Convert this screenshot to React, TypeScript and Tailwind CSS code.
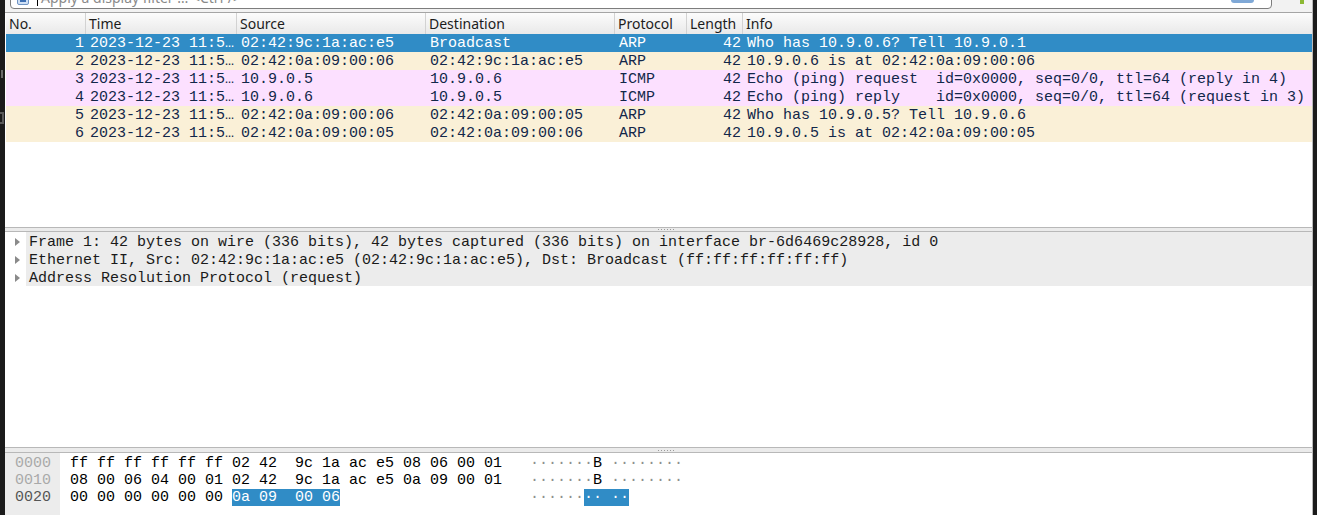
import React from "react";

const mono = "font-['Liberation_Mono',monospace] text-[15px]";
const sans = "font-['Noto_Sans',sans-serif] text-[13px]";

type Packet = {
  no: number;
  src: string;
  dst: string;
  proto: string;
  info: string;
  kind: "arp" | "icmp";
};

const packets: Packet[] = [
  { no: 1, src: "02:42:9c:1a:ac:e5", dst: "Broadcast", proto: "ARP", info: "Who has 10.9.0.6? Tell 10.9.0.1", kind: "arp" },
  { no: 2, src: "02:42:0a:09:00:06", dst: "02:42:9c:1a:ac:e5", proto: "ARP", info: "10.9.0.6 is at 02:42:0a:09:00:06", kind: "arp" },
  { no: 3, src: "10.9.0.5", dst: "10.9.0.6", proto: "ICMP", info: "Echo (ping) request  id=0x0000, seq=0/0, ttl=64 (reply in 4)", kind: "icmp" },
  { no: 4, src: "10.9.0.6", dst: "10.9.0.5", proto: "ICMP", info: "Echo (ping) reply    id=0x0000, seq=0/0, ttl=64 (request in 3)", kind: "icmp" },
  { no: 5, src: "02:42:0a:09:00:06", dst: "02:42:0a:09:00:05", proto: "ARP", info: "Who has 10.9.0.5? Tell 10.9.0.6", kind: "arp" },
  { no: 6, src: "02:42:0a:09:00:05", dst: "02:42:0a:09:00:06", proto: "ARP", info: "10.9.0.5 is at 02:42:0a:09:00:05", kind: "arp" },
];

const details = [
  "Frame 1: 42 bytes on wire (336 bits), 42 bytes captured (336 bits) on interface br-6d6469c28928, id 0",
  "Ethernet II, Src: 02:42:9c:1a:ac:e5 (02:42:9c:1a:ac:e5), Dst: Broadcast (ff:ff:ff:ff:ff:ff)",
  "Address Resolution Protocol (request)",
];

const columns = [
  { label: "No.", w: "w-[80px]" },
  { label: "Time", w: "w-[151px]" },
  { label: "Source", w: "w-[189px]" },
  { label: "Destination", w: "w-[189px]" },
  { label: "Protocol", w: "w-[72px]" },
  { label: "Length", w: "w-[56px]" },
  { label: "Info", w: "flex-1" },
];

const Splitter = ({ h }: { h: string }) => (
  <div className={`${h} shrink-0 border-y border-[#b8b8b8] bg-[#ebebeb] flex items-center justify-center`}>
    <div className="flex gap-[2px] ml-[14px]">
      {[0, 1, 2, 3, 4, 5].map((i) => (
        <span key={i} className="w-px h-px bg-[#9a9a9a]" />
      ))}
    </div>
  </div>
);

const FilterBar = () => (
  <div className="h-[13px] shrink-0 bg-[#f2f2f2] border-b border-[#a5a5a5] flex items-end overflow-hidden">
    <div className="flex-1 ml-[5px] mr-[28px] h-[30px] mb-[3px] bg-white border border-[#7d7d7d] rounded-[4px] flex items-end pb-[1px] overflow-hidden">
      <div className="w-[12px] h-[14px] ml-[6px] mb-[2px] bg-[#cfe0f5] border border-[#6f94c4] rounded-[2px] flex justify-center">
        <div className="w-[6px] h-[8px] bg-[#3d6fb3] mt-[2px]" />
      </div>
      <div className="w-px h-[16px] bg-black ml-[8px] mb-[1px]" />
      <span className={`${sans} text-[14px] text-[#8a8a8a] ml-[3px] leading-[16px] mb-[1px]`}>
        Apply a display filter … &lt;Ctrl-/&gt;
      </span>
      <div className="flex-1" />
      <div className="w-[23px] h-[18px] bg-[#7fa8d6] rounded-[3px] mr-[17px] mb-[4px]" />
    </div>
    <div className="w-[4px] h-[5px] bg-[#8cb833] mb-[8px] mr-[8px]" />
  </div>
);

const PacketList = () => (
  <div className="h-[214px] shrink-0 bg-white flex flex-col pl-px">
    <div className="h-[21px] shrink-0 flex bg-gradient-to-b from-[#fcfcfc] to-[#e9e9e9]">
      {columns.map((c, i) => (
        <div
          key={c.label}
          className={`${c.w} ${sans} text-[14px] text-[#1c1c1c] pl-[3px] flex items-center ${
            i < columns.length - 1 ? "border-r border-[#d2d2d2]" : ""
          }`}
        >
          {c.label}
        </div>
      ))}
    </div>
    {packets.map((p) => {
      const selected = p.no === 1;
      const bg = selected
        ? "bg-[#308cc6] text-white"
        : p.kind === "arp"
        ? "bg-[#faf0d7] text-[#12274a]"
        : "bg-[#fce0ff] text-[#12274a]";
      return (
        <div key={p.no} className={`h-[18px] pt-[3px] flex items-center whitespace-pre ${mono} ${bg}`}>
          <div className="w-[80px] text-right pr-[2px]">{p.no}</div>
          <div className="w-[151px] pl-[4px]">2023-12-23 11:5…</div>
          <div className="w-[189px] pl-[4px]">{p.src}</div>
          <div className="w-[189px] pl-[4px]">{p.dst}</div>
          <div className="w-[72px] pl-[4px]">{p.proto}</div>
          <div className="w-[56px] text-right pr-[2px]">42</div>
          <div className="flex-1 pl-[4px]">{p.info}</div>
        </div>
      );
    })}
  </div>
);

const DetailPane = () => (
  <div className="h-[215px] shrink-0 bg-white flex flex-col">
    {details.map((d) => (
      <div key={d} className="h-[18px] flex items-center">
        <div className="w-[21px] h-full flex items-center pl-[10px] pt-[2px]">
          <svg width="5" height="8" viewBox="0 0 5 8">
            <path d="M0 0 L5 4 L0 8 Z" fill="#8a8a8a" />
          </svg>
        </div>
        <div className={`flex-1 h-full flex items-center pt-[4px] bg-[#ececec] pl-[3px] whitespace-pre text-[#1a1a1a] ${mono}`}>
          {d}
        </div>
      </div>
    ))}
  </div>
);

const hexLines = [
  { off: "0000", pre: "ff ff ff ff ff ff 02 42  9c 1a ac e5 08 06 00 01", mark: "", offColor: "text-[#a9a9a9]" },
  { off: "0010", pre: "08 00 06 04 00 01 02 42  9c 1a ac e5 0a 09 00 01", mark: "", offColor: "text-[#a9a9a9]" },
  { off: "0020", pre: "00 00 00 00 00 00 ", mark: "0a 09  00 06", offColor: "text-[#555555]" },
];

const BytesPane = () => (
  <div className="flex-1 bg-white flex">
    <div className="w-[55px] bg-[#ececec] pt-[2px]">
      {hexLines.map((l) => (
        <div key={l.off} className={`h-[17px] leading-[17px] pl-[10px] ${mono} ${l.offColor}`}>
          {l.off}
        </div>
      ))}
    </div>
    <div className="pl-[10px] pt-[2px]">
      {hexLines.map((l) => (
        <div key={l.off} className={`h-[17px] leading-[17px] whitespace-pre flex text-black ${mono}`}>
          <div className="w-[460px]">
            {l.pre}
            {l.mark && <span className="bg-[#308cc6] text-white">{l.mark}</span>}
          </div>
          {l.mark ? (
            <div>
              <span className="text-[#8f8f8f]">······</span>
              <span className="bg-[#308cc6] text-white">·· ··</span>
            </div>
          ) : (
            <div>
              <span className="text-[#8f8f8f]">·······</span>
              <span>B</span>
              <span className="text-[#8f8f8f]"> ········</span>
            </div>
          )}
        </div>
      ))}
    </div>
  </div>
);

export default function App() {
  return (
    <div className="w-[1317px] h-[515px] bg-[#1b1b1b] flex overflow-hidden">
      <div className="w-[5px] shrink-0 flex flex-col">
        <div className="h-[70px]" />
        <div className="w-[3px] h-[8px] border-r-2 border-[#6a6a6a]" />
        <div className="h-[34px]" />
        <div className="w-[4px] h-[12px] border-y-2 border-r-2 border-[#5a5a5a]" />
      </div>
      <div className="w-[1308px] flex flex-col bg-white border-r border-[#b9b9b9]">
        <FilterBar />
        <PacketList />
        <Splitter h="h-[5px]" />
        <DetailPane />
        <Splitter h="h-[6px]" />
        <BytesPane />
      </div>
    </div>
  );
}
